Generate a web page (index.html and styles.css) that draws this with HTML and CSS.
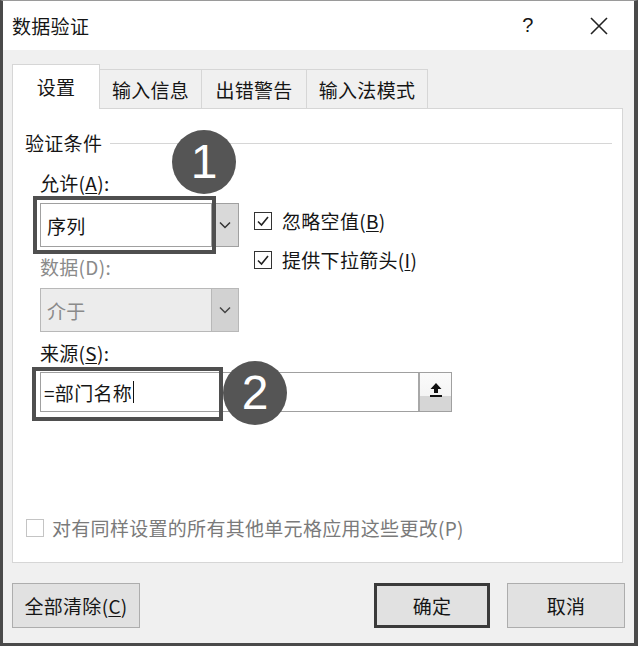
FILE: index.html
```html
<!DOCTYPE html>
<html lang="zh-CN">
<head>
    <meta charset="UTF-8">
    <meta name="viewport" content="width=device-width, initial-scale=1.0">
    <title>数据验证</title>
    <link rel="stylesheet" href="styles.css">
</head>
<body>

<div class="window">
    <div class="titlebar">
        <span class="title">数据验证</span>
        <span class="help">?</span>
        <span class="close">
            <svg width="18" height="18" viewBox="0 0 18 18"><path d="M1 1L17 17M17 1L1 17" stroke="#222" stroke-width="1.6" fill="none"/></svg>
        </span>
    </div>

    <div class="dialog">
        <div class="tabs">
            <div class="tab active">设置</div>
            <div class="tab t2">输入信息</div>
            <div class="tab t3">出错警告</div>
            <div class="tab t4">输入法模式</div>
        </div>

        <div class="panel">
            <div class="legend">验证条件</div>

            <div class="fields">
                <div class="criteria">
                    <div class="left-col">
                        <div class="label">允许(<u>A</u>):</div>
                        <div class="combo marked">
                            <span class="value">序列</span>
                            <span class="drop">
                                <svg width="12" height="8" viewBox="0 0 12 8"><path d="M1 1.5L6 6.5L11 1.5" stroke="#333" stroke-width="1.5" fill="none"/></svg>
                            </span>
                            <div class="highlight hl1"></div>
                            <div class="badge b1">1</div>
                        </div>
                        <div class="label disabled">数据(D):</div>
                        <div class="combo off">
                            <span class="value">介于</span>
                            <span class="drop">
                                <svg width="12" height="8" viewBox="0 0 12 8"><path d="M1 1.5L6 6.5L11 1.5" stroke="#444" stroke-width="1.5" fill="none"/></svg>
                            </span>
                        </div>
                    </div>
                    <div class="right-col">
                        <div class="check-row">
                            <span class="box checked">
                                <svg width="14" height="14" viewBox="0 0 14 14"><path d="M2 7.5L5.5 11L12 3" stroke="#222" stroke-width="1.6" fill="none"/></svg>
                            </span>
                            忽略空值(<u>B</u>)
                        </div>
                        <div class="check-row">
                            <span class="box checked">
                                <svg width="14" height="14" viewBox="0 0 14 14"><path d="M2 7.5L5.5 11L12 3" stroke="#222" stroke-width="1.6" fill="none"/></svg>
                            </span>
                            提供下拉箭头(<u>I</u>)
                        </div>
                    </div>
                </div>

                <div class="label source-label">来源(<u>S</u>):</div>
                <div class="source">
                    <span class="value">=部门名称<span class="caret"></span></span>
                    <span class="pick">
                        <svg width="14" height="16" viewBox="0 0 14 16"><path d="M7 1L1.5 7H5V11H9V7H12.5Z" fill="#111"/><rect x="1" y="13" width="12" height="2" fill="#111"/></svg>
                    </span>
                    <div class="highlight hl2"></div>
                    <div class="badge b2">2</div>
                </div>
            </div>

            <div class="apply-row">
                <span class="box off-box"></span>
                对有同样设置的所有其他单元格应用这些更改(P)
            </div>
        </div>

        <div class="buttons">
            <button class="btn clear">全部清除(<u>C</u>)</button>
            <span class="spacer"></span>
            <button class="btn ok">确定</button>
            <button class="btn cancel">取消</button>
        </div>
    </div>
</div>

</body>
</html>
```

FILE: styles.css
```css
body {
    margin: 0;
    font-family: "Noto Sans CJK SC", "Noto Sans", sans-serif;
    font-size: 19px;
    letter-spacing: 0.3px;
    color: #151515;
    background-color: #f0f0f0;
}
.window {
    width: 638px;
    height: 646px;
    box-sizing: border-box;
    border-top: 1px solid #9a9a9a;
    border-left: 3px solid #4a4a4a;
    border-right: 4px solid #4a4a4a;
    border-bottom: 3px solid #4a4a4a;
    background-color: #f0f0f0;
    display: flex;
    flex-direction: column;
}
.titlebar {
    height: 49px;
    background-color: #fff;
    display: flex;
    align-items: center;
    padding-left: 9px;
}
.title {
    flex: 1;
}
.help {
    font-family: "Liberation Sans", sans-serif;
    font-size: 20px;
    width: 20px;
    text-align: center;
    margin-right: 52px;
}
.close {
    display: flex;
    margin-right: 26px;
}
.dialog {
    padding: 14px 11px 0 9px;
}
.tabs {
    display: flex;
    align-items: flex-end;
    height: 44px;
    position: relative;
    z-index: 1;
}
.tab {
    height: 39px;
    box-sizing: border-box;
    border: 1px solid #d6d6d6;
    border-bottom: none;
    border-left: none;
    background-color: #f0f0f0;
    display: flex;
    align-items: center;
    justify-content: center;
}
.tab.active {
    width: 88px;
    height: 45px;
    margin-bottom: -1px;
    border-left: 1px solid #d6d6d6;
    background-color: #fff;
    padding-bottom: 2px;
}
.t2 { width: 102px; }
.t3 { width: 105px; }
.t4 { width: 121px; }
.panel {
    height: 455px;
    box-sizing: border-box;
    background-color: #fff;
    border: 1px solid #d6d6d6;
    padding: 22px 10px 22px 12px;
    display: flex;
    flex-direction: column;
}
.legend {
    display: flex;
    align-items: center;
    line-height: 24px;
}
.legend::after {
    content: "";
    flex: 1;
    height: 1px;
    background-color: #d6d6d6;
    margin-left: 8px;
}
.fields {
    padding-left: 15px;
    margin-top: 16px;
}
.label {
    line-height: 24px;
}
.disabled {
    color: #8a8a8a;
}
.criteria {
    display: flex;
}
.left-col {
    width: 199px;
}
.right-col {
    margin-left: 15px;
    padding-top: 38px;
}
.check-row {
    display: flex;
    align-items: center;
    line-height: 24px;
    margin-bottom: 15px;
}
.box {
    width: 18px;
    height: 18px;
    box-sizing: border-box;
    margin-right: 10px;
    display: flex;
    align-items: center;
    justify-content: center;
}
.checked {
    border: 1.5px solid #333;
}
.combo {
    position: relative;
    height: 44px;
    margin: 8px 0 8px;
    box-sizing: border-box;
    border: 1px solid #a0a0a0;
    background-color: #fff;
    display: flex;
}
.combo .value {
    flex: 1;
    padding-left: 6px;
    display: flex;
    align-items: center;
}
.combo .drop {
    width: 26px;
    background-color: #d9d9d9;
    border-left: 1px solid #a0a0a0;
    display: flex;
    align-items: center;
    justify-content: center;
}
.combo.off {
    margin-top: 9px;
    border-color: #b8b8b8;
    background-color: #ececec;
    color: #8a8a8a;
}
.combo.off .drop {
    background-color: #d2d2d2;
    border-left-color: #b8b8b8;
}
.source-label {
    margin-top: 1px;
}
.source {
    position: relative;
    width: 412px;
    height: 40px;
    margin-top: 7px;
    box-sizing: border-box;
    border: 1px solid #a0a0a0;
    display: flex;
}
.source .value {
    flex: 1;
    padding-left: 3px;
    display: flex;
    align-items: center;
}
.caret {
    display: inline-block;
    width: 1px;
    height: 22px;
    background-color: #111;
    margin-left: 1px;
}
.pick {
    width: 33px;
    border-left: 2px solid #a8a8a8;
    background: linear-gradient(#fbfbfb 0, #f4f4f4 60%, #d6d6d6 60%);
    display: flex;
    align-items: flex-start;
    justify-content: center;
    padding-top: 9px;
    box-sizing: border-box;
}
.highlight {
    position: absolute;
    border: 4px solid #4f4f4f;
    box-sizing: border-box;
    pointer-events: none;
}
.hl1 {
    left: -8px;
    top: -8px;
    width: 183px;
    height: 58px;
}
.hl2 {
    left: -9px;
    top: -6px;
    width: 191px;
    height: 54px;
}
.badge {
    position: absolute;
    width: 64px;
    height: 64px;
    border-radius: 50%;
    background-color: #555;
    color: #fff;
    font-family: "Liberation Sans", sans-serif;
    font-size: 48px;
    letter-spacing: 0;
    line-height: 64px;
    text-align: center;
}
.b1 {
    left: 131px;
    top: -74px;
}
.b2 {
    left: 182px;
    top: -12px;
}
.apply-row {
    margin-top: auto;
    display: flex;
    align-items: center;
    line-height: 24px;
    color: #7a7a7a;
}
.off-box {
    margin-left: 1px;
    border: 1px solid #c4c4c4;
    margin-right: 8px;
}
.buttons {
    display: flex;
    margin-top: 20px;
    margin-right: -2px;
}
.spacer {
    flex: 1;
}
.btn {
    height: 45px;
    font-family: inherit;
    font-size: 19px;
    letter-spacing: 0.3px;
    color: #151515;
    background-color: #e1e1e1;
    border: 1px solid #adadad;
    padding: 0;
}
.clear {
    width: 128px;
}
.ok {
    width: 116px;
    border: 3px solid #3a3a3a;
    margin-right: 17px;
}
.cancel {
    width: 118px;
}
u {
    text-underline-offset: 2px;
}
```
